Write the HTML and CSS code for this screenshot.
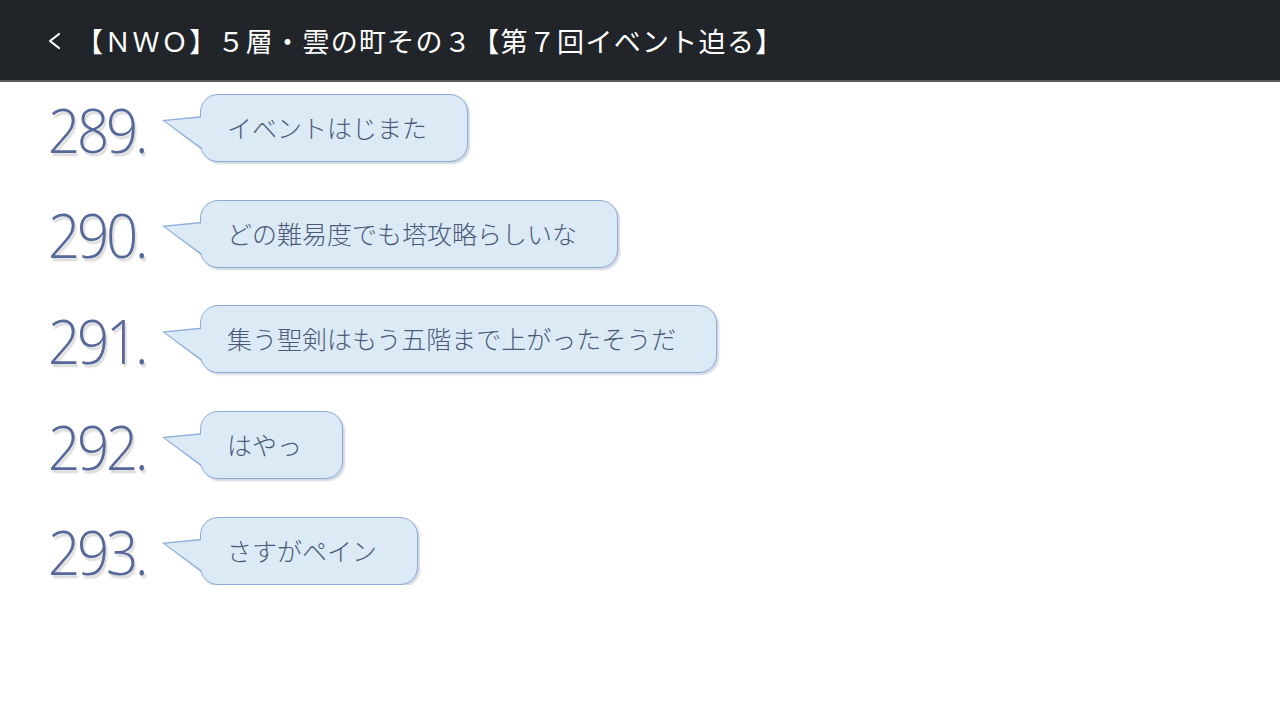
FILE: index.html
```html
<!DOCTYPE html>
<html lang="ja">
<head>
<meta charset="utf-8">
<title>スレッド</title>
<link rel="stylesheet" href="styles.css">
</head>
<body>
<header class="topbar">
  <svg class="back" width="16" height="20" viewBox="0 0 16 20"><path d="M13 3 L4 10 L13 17" fill="none" stroke="#ffffff" stroke-width="2.2" stroke-linecap="round" stroke-linejoin="round"/></svg>
  <h1 class="title">【ＮＷＯ】５層・雲の町その３【第７回イベント迫る】</h1>
</header>
<main class="posts">
  <div class="post">
    <div class="num">289.</div>
    <div class="tail"></div>
    <div class="bubble">イベントはじまた</div>
  </div>
  <div class="post">
    <div class="num">290.</div>
    <div class="tail"></div>
    <div class="bubble">どの難易度でも塔攻略らしいな</div>
  </div>
  <div class="post">
    <div class="num">291.</div>
    <div class="tail"></div>
    <div class="bubble">集う聖剣はもう五階まで上がったそうだ</div>
  </div>
  <div class="post">
    <div class="num">292.</div>
    <div class="tail"></div>
    <div class="bubble">はやっ</div>
  </div>
  <div class="post">
    <div class="num">293.</div>
    <div class="tail"></div>
    <div class="bubble">さすがペイン</div>
  </div>
</main>
</body>
</html>
```
FILE: styles.css
```css
html, body {
  margin: 0;
  padding: 0;
  background: #ffffff;
  font-family: "Noto Sans CJK JP", "Noto Sans", sans-serif;
}
.topbar {
  height: 80px;
  background: #212529;
  border-bottom: 2px solid #5b5e62;
  display: flex;
  align-items: center;
  padding-left: 46px;
  gap: 14px;
}
.back {
  flex: none;
  margin-top: 2px;
}
.title {
  margin: 0;
  color: #ffffff;
  font-size: 27px;
  font-weight: 400;
  letter-spacing: 1.3px;
  line-height: 1;
}
.posts {
  padding: 12px 0 0 48px;
  display: flex;
  flex-direction: column;
  gap: 37.7px;
}
.post {
  display: flex;
  align-items: center;
  height: 68px;
}
.num {
  width: 114px;
  flex: none;
  font-family: "Open Sans", "Noto Sans", sans-serif;
  font-weight: 300;
  font-size: 61px;
  letter-spacing: -3.5px;
  color: #56679a;
  text-shadow: 2px 3px 2px rgba(0, 0, 0, 0.16);
  line-height: 1;
  margin-top: 2px;
  transform: scaleX(0.925);
  transform-origin: left center;
}
.tail {
  position: relative;
  width: 38px;
  height: 68px;
  flex: none;
}
.tail::before {
  content: "";
  position: absolute;
  left: 0;
  top: 0;
  width: 40px;
  height: 68px;
  background: #8faedb;
  clip-path: polygon(0 26px, 40px 22px, 40px 56px);
}
.tail::after {
  content: "";
  position: absolute;
  left: 3px;
  top: 0;
  width: 40px;
  height: 68px;
  background: #dbeaf5;
  clip-path: polygon(0 27px, 37px 23.5px, 37px 54px);
  z-index: 2;
}
.bubble {
  position: relative;
  box-sizing: border-box;
  height: 68px;
  display: flex;
  align-items: center;
  padding: 0 40px 2px 26px;
  background: #dbeaf5;
  border: 1.5px solid #8eaad9;
  border-radius: 18px;
  box-shadow: 2px 2px 2px rgba(120, 140, 170, 0.35);
  color: #4c5a7a;
  font-size: 25px;
  font-weight: 300;
  white-space: nowrap;
}
```
